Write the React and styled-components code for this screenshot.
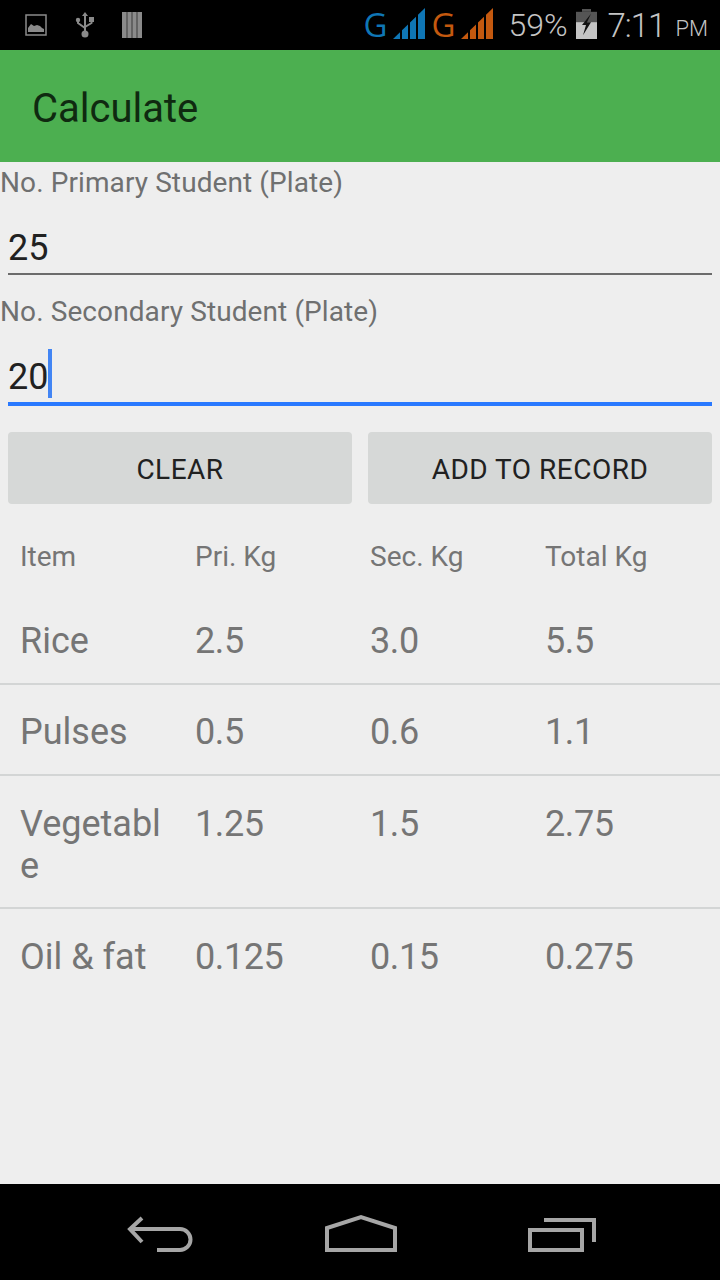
import React from "react";
import styled, { createGlobalStyle } from "styled-components";

const Global = createGlobalStyle`
  html, body { margin: 0; padding: 0; background: #eeeeee; }
  * { box-sizing: border-box; }
`;

const Screen = styled.div`
  width: 720px;
  height: 1280px;
  display: flex;
  flex-direction: column;
  background: #eeeeee;
  font-family: Roboto, "Liberation Sans", sans-serif;
  overflow: hidden;
`;

const StatusBar = styled.div`
  height: 50px;
  background: #000;
  display: flex;
  align-items: center;
  justify-content: space-between;
  padding: 0 12px 0 25px;
`;

const StatusLeft = styled.div`
  display: flex;
  align-items: center;
  gap: 27.5px;
`;

const StatusRight = styled.div`
  display: flex;
  align-items: center;
  height: 50px;
`;

const NetLetter = styled.span`
  font-family: "Open Sans", sans-serif;
  font-size: 33px;
  line-height: 50px;
  color: ${p => p.$color};
  margin-left: ${p => p.$ml || 0}px;
  margin-right: 6px;
`;

const SignalSlot = styled.span`
  display: flex;
  margin-bottom: 3px;
`;

const Percent = styled.span`
  font-size: 32px;
  color: #c4c4c4;
  margin-left: 15px;
  margin-right: 8px;
  font-weight: 300;
`;

const BatterySlot = styled.span`
  display: flex;
  margin-bottom: 2px;
`;

const Clock = styled.span`
  font-size: 33px;
  color: #c4c4c4;
  font-weight: 300;
  margin-left: 11px;
  letter-spacing: -1px;
`;

const Meridiem = styled.span`
  font-size: 22px;
  color: #c4c4c4;
  margin-left: 10px;
  margin-top: 6px;
  font-weight: 300;
`;

const AppBar = styled.div`
  height: 112px;
  background: #4caf50;
  display: flex;
  align-items: center;
  padding: 5px 0 0 32px;
  font-size: 40px;
  color: #0f2a10;
`;

const Content = styled.div`
  flex: 1;
  display: flex;
  flex-direction: column;
  padding-top: 1px;
`;

const FieldLabel = styled.div`
  font-size: 28px;
  line-height: 40px;
  letter-spacing: 0.1px;
  color: #6f7070;
`;

const Field = styled.div`
  margin: 0 8px;
  height: ${p => p.$h}px;
  display: flex;
  align-items: flex-end;
  padding-bottom: 4px;
  font-size: 36px;
  line-height: 42px;
  color: #212121;
  border-bottom: ${p => (p.$focus ? "4px solid #2979ff" : "2px solid #6b6b6b")};
`;

const Caret = styled.span`
  width: 4px;
  height: 49px;
  background: #4285f4;
  margin-left: 0;
`;

const Gap = styled.div`
  height: ${p => p.$h}px;
`;

const Buttons = styled.div`
  display: flex;
  gap: 16px;
  margin: 26px 8px 0;
`;

const Button = styled.div`
  height: 72px;
  width: ${p => p.$w}px;
  background: #d6d8d7;
  border-radius: 4px;
  display: flex;
  align-items: center;
  justify-content: center;
  padding-top: 2px;
  font-size: 28px;
  letter-spacing: 0.5px;
  color: #212121;
`;

const Table = styled.div`
  display: flex;
  flex-direction: column;
  margin-top: 14px;
`;

const Row = styled.div`
  display: grid;
  grid-template-columns: repeat(4, 175px);
  padding: ${p => p.$pad} 0 0 20px;
  height: ${p => p.$h}px;
  border-bottom: ${p => (p.$line ? "2px solid #d3d5d5" : "none")};
  color: #757575;
`;

const Cell = styled.div`
  font-size: ${p => (p.$head ? 28 : 36)}px;
  line-height: ${p => (p.$head ? 40 : 42)}px;
  letter-spacing: ${p => (p.$num ? "-0.4px" : "0")};
  width: 150px;
  word-break: break-all;
`;

const NavBar = styled.div`
  height: 96px;
  background: #000;
  display: flex;
  align-items: center;
  justify-content: space-between;
  padding: 0 124px 0 127px;
`;

const rows = [
  { cells: ["Rice", "2.5", "3.0", "5.5"], h: 92, pad: "27px" },
  { cells: ["Pulses", "0.5", "0.6", "1.1"], h: 91, pad: "26px" },
  { cells: ["Vegetable", "1.25", "1.5", "2.75"], h: 133, pad: "27px" },
  { cells: ["Oil & fat", "0.125", "0.15", "0.275"], h: 92, pad: "27px", last: true },
];

const signalBars = [[0, 7], [9, 15], [17, 23], [25, 32]];

const ImageIcon = () => (
  <svg width="22" height="22" viewBox="0 0 22 22">
    <rect x="1" y="1" width="20" height="20" fill="none" stroke="#8a8a8a" strokeWidth="1.5" />
    <path d="M3 18v-4l3-4 3 2 3-1 3 1 2 2 2 1v3z" fill="#8a8a8a" />
  </svg>
);

const UsbIcon = () => (
  <svg width="20" height="28" viewBox="0 0 20 28">
    <path d="M10 1l3 4h-2v15h-2V5H7z" fill="#8a8a8a" />
    <circle cx="10" cy="23" r="3.5" fill="#8a8a8a" />
    <circle cx="3" cy="9" r="2.2" fill="#8a8a8a" />
    <rect x="14" y="6" width="5" height="5" fill="#8a8a8a" />
    <path d="M3 10v2l7 5M16.5 10v2l-6.5 4" fill="none" stroke="#8a8a8a" strokeWidth="2" />
  </svg>
);

const BarsIcon = () => (
  <svg width="20" height="26" viewBox="0 0 20 26">
    <rect width="20" height="26" fill="#8a8a8a" />
    <path d="M5 0v26M10 0v26M15 0v26" stroke="#3a3a3a" strokeWidth="1" />
  </svg>
);

const Signal = ({ color }) => (
  <svg width="32" height="31" viewBox="0 0 32 32" preserveAspectRatio="none">
    {signalBars.map(([a, b]) => (
      <path key={a} d={`M${a} 32V${32 - a}L${b} ${32 - b}V32z`} fill={color} />
    ))}
  </svg>
);

const Battery = () => (
  <svg width="21" height="30" viewBox="0 0 21 32" preserveAspectRatio="none">
    <rect x="6" y="0" width="9" height="3" fill="#555" />
    <rect x="0" y="3" width="21" height="11" fill="#555" />
    <rect x="0" y="14" width="21" height="18" fill="#c4c4c4" />
    <path d="M15 5L6 17h4l-3 11 8-14h-4z" fill="#111" />
  </svg>
);

const BackIcon = () => (
  <svg width="66" height="40" viewBox="0 0 66 40">
    <path d="M15 6L3 17l12 13" fill="none" stroke="#a6a6a6" strokeWidth="4" />
    <path d="M3 17h50a10.5 10.5 0 0 1 0 21H30" fill="none" stroke="#a6a6a6" strokeWidth="4" />
  </svg>
);

const HomeIcon = () => (
  <svg width="72" height="40" viewBox="0 0 72 40">
    <path d="M2 38V16L36 5l34 11v22z" fill="none" stroke="#a6a6a6" strokeWidth="4" />
  </svg>
);

const RecentIcon = () => (
  <svg width="68" height="40" viewBox="0 0 68 40">
    <rect x="2" y="18" width="52" height="20" fill="none" stroke="#a6a6a6" strokeWidth="4" />
    <path d="M16 8h50v22" fill="none" stroke="#a6a6a6" strokeWidth="4" />
  </svg>
);

export default function App() {
  return (
    <Screen>
      <Global />
      <StatusBar>
        <StatusLeft>
          <ImageIcon />
          <UsbIcon />
          <BarsIcon />
        </StatusLeft>
        <StatusRight>
          <NetLetter $color="#0f76b5">G</NetLetter>
          <SignalSlot><Signal color="#0f76b5" /></SignalSlot>
          <NetLetter $color="#c4590f" $ml={6}>G</NetLetter>
          <SignalSlot><Signal color="#c4590f" /></SignalSlot>
          <Percent>59%</Percent>
          <BatterySlot><Battery /></BatterySlot>
          <Clock>7:11</Clock>
          <Meridiem>PM</Meridiem>
        </StatusRight>
      </StatusBar>
      <AppBar>Calculate</AppBar>
      <Content>
        <FieldLabel>No. Primary Student (Plate)</FieldLabel>
        <Field $h={72}>25</Field>
        <Gap $h={17} />
        <FieldLabel>No. Secondary Student (Plate)</FieldLabel>
        <Field $h={74} $focus>
          20
          <Caret />
        </Field>
        <Buttons>
          <Button $w={344}>CLEAR</Button>
          <Button $w={344}>ADD TO RECORD</Button>
        </Buttons>
        <Table>
          <Row $h={75} $pad="19px">
            <Cell $head>Item</Cell>
            <Cell $head>Pri. Kg</Cell>
            <Cell $head>Sec. Kg</Cell>
            <Cell $head>Total Kg</Cell>
          </Row>
          {rows.map(r => (
            <Row key={r.cells[0]} $h={r.h} $pad={r.pad} $line={!r.last}>
              {r.cells.map((c, i) => (
                <Cell key={i} $num={i > 0}>{c}</Cell>
              ))}
            </Row>
          ))}
        </Table>
      </Content>
      <NavBar>
        <BackIcon />
        <HomeIcon />
        <RecentIcon />
      </NavBar>
    </Screen>
  );
}
